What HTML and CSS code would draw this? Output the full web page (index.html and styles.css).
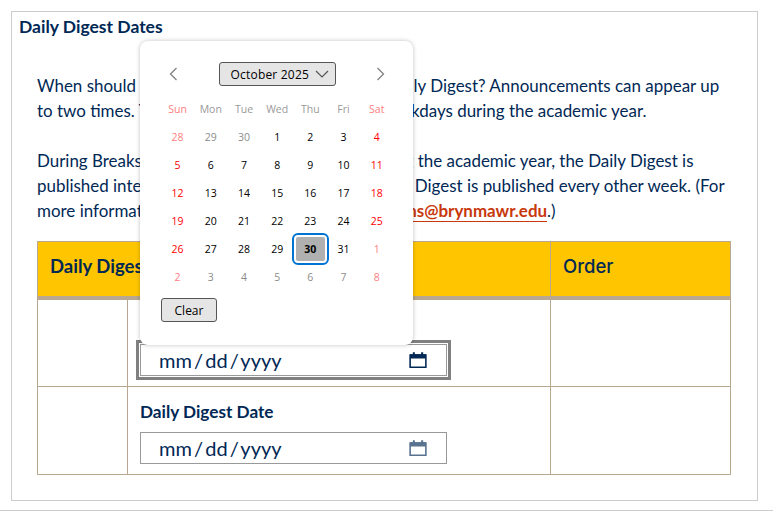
FILE: index.html
```html
<!DOCTYPE html>
<html>
  <head>
    <title>Daily Digest Dates</title>
    <link rel="stylesheet" href="styles.css">
  </head>
  <body>
    <fieldset class="digest-box">
      <legend class="digest-title">Daily Digest Dates</legend>
      <div class="intro">
        <p>When should this announcement appear in the Daily Digest? Announcements can appear up<br>
        to two times. The Daily Digest is published on weekdays during the academic year.</p>
        <p>During Breaks, holidays and at certain times during the academic year, the Daily Digest is<br>
        published intermittently. During summer, the Daily Digest is published every other week. (For<br>
        more information, please mail us at <a href="#">communications@brynmawr.edu</a>.)</p>
      </div>
      <table class="dates">
        <colgroup>
          <col class="col-num">
          <col class="col-date">
          <col class="col-order">
        </colgroup>
        <thead>
          <tr>
            <th colspan="2">Daily Digest Date</th>
            <th class="order">Order</th>
          </tr>
        </thead>
        <tbody>
          <tr class="first">
            <td></td>
            <td>
              <label class="date-label">Daily Digest Date</label>
              <div class="date-field focused">
                <span>mm / dd / yyyy</span>
                <svg class="cal-icon" viewBox="0 0 16 16"><path d="M1 3.5h14v11H1z M1 6h14" fill="none" stroke="currentColor" stroke-width="1.4"/><path d="M1 2.8h14V6H1zM3.4 1h1.8v3H3.4zM10.8 1h1.8v3h-1.8z" fill="currentColor"/></svg>
              </div>
            </td>
            <td></td>
          </tr>
          <tr>
            <td></td>
            <td>
              <label class="date-label">Daily Digest Date</label>
              <div class="date-field">
                <span>mm / dd / yyyy</span>
                <svg class="cal-icon faded" viewBox="0 0 16 16"><path d="M1 3.5h14v11H1z M1 6h14" fill="none" stroke="currentColor" stroke-width="1.4"/><path d="M1 2.8h14V6H1zM3.4 1h1.8v3H3.4zM10.8 1h1.8v3h-1.8z" fill="currentColor"/></svg>
              </div>
            </td>
            <td></td>
          </tr>
        </tbody>
      </table>
    </fieldset>
    <div class="page-rule"></div>

    <div class="picker">
      <div class="picker-head">
        <svg class="arrow" viewBox="0 0 10 14"><path d="M8.5 1 2.5 7l6 6" fill="none" stroke="currentColor" stroke-width="1.3"/></svg>
        <div class="month-select">October 2025
          <svg class="chev" viewBox="0 0 14 8"><path d="M1 1l6 6 6-6" fill="none" stroke="currentColor" stroke-width="1.2"/></svg>
        </div>
        <svg class="arrow" viewBox="0 0 10 14"><path d="M1.5 1l6 6-6 6" fill="none" stroke="currentColor" stroke-width="1.3"/></svg>
      </div>
      <div class="days">
        <span class="wk end">Sun</span><span class="wk">Mon</span><span class="wk">Tue</span><span class="wk">Wed</span><span class="wk">Thu</span><span class="wk">Fri</span><span class="wk end">Sat</span>
        <span class="out end">28</span><span class="out">29</span><span class="out">30</span><span>1</span><span>2</span><span>3</span><span class="end">4</span>
        <span class="end">5</span><span>6</span><span>7</span><span>8</span><span>9</span><span>10</span><span class="end">11</span>
        <span class="end">12</span><span>13</span><span>14</span><span>15</span><span>16</span><span>17</span><span class="end">18</span>
        <span class="end">19</span><span>20</span><span>21</span><span>22</span><span>23</span><span>24</span><span class="end">25</span>
        <span class="end">26</span><span>27</span><span>28</span><span>29</span><span class="today">30</span><span>31</span><span class="out end">1</span>
        <span class="out end">2</span><span class="out">3</span><span class="out">4</span><span class="out">5</span><span class="out">6</span><span class="out">7</span><span class="out end">8</span>
      </div>
      <button class="clear">Clear</button>
    </div>
  </body>
</html>
```
FILE: styles.css
```css
* {
  box-sizing: border-box;
}

body {
  margin: 0;
  height: 511px;
  overflow: hidden;
  background: #fff;
  color: #002855;
  font-family: "Open Sans", sans-serif;
}

.digest-box {
  width: 747px;
  height: 490px;
  margin: 11px 0 0 11px;
  padding: 0 26px 0 25px;
  border: 1px solid #ccc;
  display: block;
}

.digest-title {
  float: left;
  width: 100%;
  margin: 3px 0 0 -18px;
  padding: 0;
  font-family: Lato, sans-serif;
  font-size: 17.5px;
  font-weight: 700;
  line-height: 24px;
  color: #002855;
}

.intro {
  clear: both;
  padding-top: 34px;
  font-family: Lato, sans-serif;
  font-size: 16.95px;
  line-height: 25px;
  white-space: nowrap;
}

.intro p {
  margin: 0 0 25px;
}

.intro a {
  color: #c8380c;
  font-weight: 700;
  text-decoration: none;
  border-bottom: 1px solid #c8380c;
}

.dates {
  width: 694px;
  border-collapse: collapse;
  table-layout: fixed;
  margin-top: -7px;
}

.col-num {
  width: 90px;
}

.col-date {
  width: 423px;
}

.dates th {
  height: 56px;
  padding: 0 12px 6px;
  text-align: left;
  background: #ffc600;
  border: 1px solid #b9a88f;
  border-bottom: 4px solid #b9a88f;
  font-family: Lato, sans-serif;
  font-size: 18.5px;
  font-weight: 700;
}

.dates th.order {
  font-family: Inter, sans-serif;
  font-size: 18.5px;
  font-weight: 500;
}

.dates td {
  height: 88px;
  padding: 0 3px 0 12px;
  border: 1px solid #b9a88f;
  vertical-align: top;
}

.dates .first td {
  height: 89px;
}

.date-label {
  display: block;
  margin-top: 14px;
  font-family: Lato, sans-serif;
  font-size: 17.2px;
  font-weight: 700;
  line-height: 22px;
}

.first .date-label {
  margin-top: 13px;
}

.date-field {
  display: flex;
  align-items: center;
  justify-content: space-between;
  width: 307px;
  height: 32px;
  margin-top: 9px;
  padding: 0 19px 0 18px;
  border: 1px solid #999;
  font-family: Lato, sans-serif;
  font-size: 20px;
  word-spacing: -3px;
}

.date-field.focused {
  outline: 3px solid #808080;
  outline-offset: 1px;
}

.cal-icon {
  width: 18px;
  height: 18px;
  color: #002855;
}

.cal-icon.faded {
  opacity: 0.65;
}

.page-rule {
  height: 1px;
  margin-top: 9px;
  background: #ccc;
}

.picker {
  position: absolute;
  left: 140px;
  top: 41px;
  width: 273px;
  height: 304px;
  padding: 21px 20px 0 21px;
  background: #fff;
  border-radius: 8px;
  box-shadow: 0 0 4px rgba(0, 0, 0, 0.25);
  font-family: "Open Sans", sans-serif;
  color: #000;
}

.picker-head {
  display: flex;
  align-items: center;
  justify-content: space-between;
  height: 24px;
  padding: 0 7px 0 7px;
  color: #808080;
}

.arrow {
  width: 10px;
  height: 14px;
}

.month-select {
  display: flex;
  align-items: center;
  justify-content: space-between;
  width: 117px;
  height: 24px;
  padding: 0 6px 0 11px;
  background: #e5e5e5;
  border: 1px solid #555;
  border-radius: 3px;
  color: #000;
  font-size: 12px;
  letter-spacing: 0.2px;
  white-space: nowrap;
}

.chev {
  width: 14px;
  height: 8px;
  color: #555;
}

.days {
  display: grid;
  grid-template-columns: repeat(7, 33.2px);
  grid-auto-rows: 28px;
  margin: 9px 0 0 0;
  font-size: 10.5px;
}

.days span {
  display: flex;
  align-items: center;
  justify-content: center;
}

.days .wk {
  color: #9a9a9a;
}

.days .end {
  color: #f00;
}

.days .out {
  color: #8c8c8c;
}

.days .wk.end,
.days .out.end {
  color: #ff8080;
}

.days .today {
  background: #b0b0b0;
  border: 2px solid #fff;
  border-radius: 4px;
  outline: 2px solid #0074d0;
  outline-offset: 0;
  font-weight: 700;
}

.clear {
  display: block;
  width: 56px;
  height: 24px;
  margin-top: 7px;
  padding: 0;
  background: #e5e5e5;
  border: 1px solid #555;
  border-radius: 3px;
  color: #000;
  font-family: "Open Sans", sans-serif;
  font-size: 12px;
}
```
